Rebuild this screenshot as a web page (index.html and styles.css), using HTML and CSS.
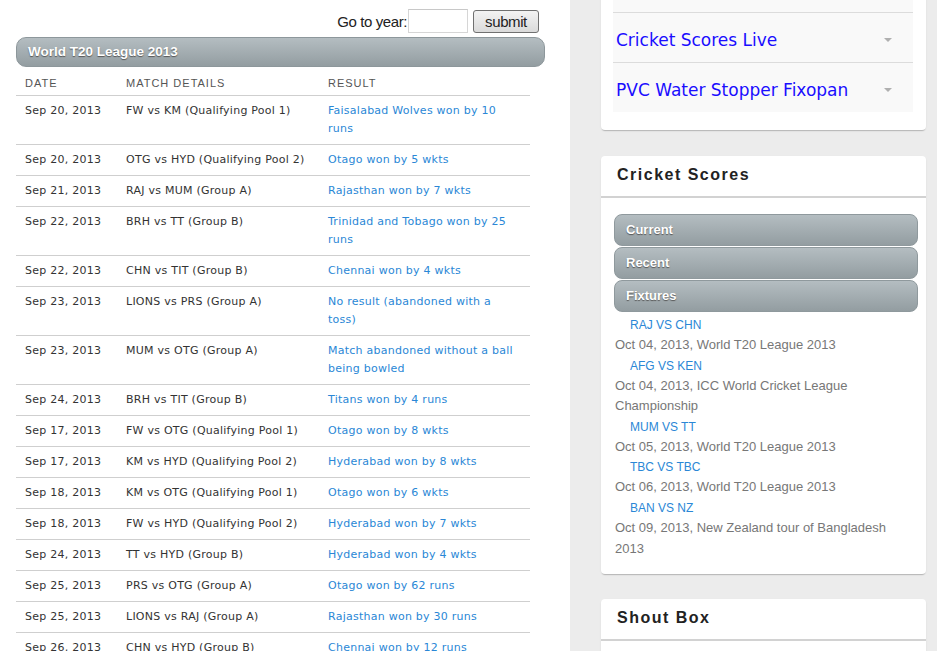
FILE: index.html
```html
<!DOCTYPE html>
<html>
<head>
<meta charset="utf-8">
<link rel="stylesheet" href="styles.css">
</head>
<body>
<div class="page">
  <main class="main">
    <form class="year-form">
      <label class="year-label">Go to year:</label>
      <input class="year-input" type="text">
      <button class="year-submit" type="button">submit</button>
    </form>
    <div class="title-bar">World T20 League 2013</div>
    <table class="matches">
      <colgroup><col class="c1"><col class="c2"><col class="c3"></colgroup>
      <thead>
        <tr><th>Date</th><th>Match Details</th><th>Result</th></tr>
      </thead>
      <tbody>
        <tr><td>Sep 20, 2013</td><td>FW vs KM (Qualifying Pool 1)</td><td><a href="#">Faisalabad Wolves won by 10 runs</a></td></tr>
        <tr><td>Sep 20, 2013</td><td>OTG vs HYD (Qualifying Pool 2)</td><td><a href="#">Otago won by 5 wkts</a></td></tr>
        <tr><td>Sep 21, 2013</td><td>RAJ vs MUM (Group A)</td><td><a href="#">Rajasthan won by 7 wkts</a></td></tr>
        <tr><td>Sep 22, 2013</td><td>BRH vs TT (Group B)</td><td><a href="#">Trinidad and Tobago won by 25 runs</a></td></tr>
        <tr><td>Sep 22, 2013</td><td>CHN vs TIT (Group B)</td><td><a href="#">Chennai won by 4 wkts</a></td></tr>
        <tr><td>Sep 23, 2013</td><td>LIONS vs PRS (Group A)</td><td><a href="#">No result (abandoned with a toss)</a></td></tr>
        <tr><td>Sep 23, 2013</td><td>MUM vs OTG (Group A)</td><td><a href="#">Match abandoned without a ball being bowled</a></td></tr>
        <tr><td>Sep 24, 2013</td><td>BRH vs TIT (Group B)</td><td><a href="#">Titans won by 4 runs</a></td></tr>
        <tr><td>Sep 17, 2013</td><td>FW vs OTG (Qualifying Pool 1)</td><td><a href="#">Otago won by 8 wkts</a></td></tr>
        <tr><td>Sep 17, 2013</td><td>KM vs HYD (Qualifying Pool 2)</td><td><a href="#">Hyderabad won by 8 wkts</a></td></tr>
        <tr><td>Sep 18, 2013</td><td>KM vs OTG (Qualifying Pool 1)</td><td><a href="#">Otago won by 6 wkts</a></td></tr>
        <tr><td>Sep 18, 2013</td><td>FW vs HYD (Qualifying Pool 2)</td><td><a href="#">Hyderabad won by 7 wkts</a></td></tr>
        <tr><td>Sep 24, 2013</td><td>TT vs HYD (Group B)</td><td><a href="#">Hyderabad won by 4 wkts</a></td></tr>
        <tr><td>Sep 25, 2013</td><td>PRS vs OTG (Group A)</td><td><a href="#">Otago won by 62 runs</a></td></tr>
        <tr><td>Sep 25, 2013</td><td>LIONS vs RAJ (Group A)</td><td><a href="#">Rajasthan won by 30 runs</a></td></tr>
        <tr><td>Sep 26, 2013</td><td>CHN vs HYD (Group B)</td><td><a href="#">Chennai won by 12 runs</a></td></tr>
      </tbody>
    </table>
  </main>
  <aside class="sidebar">
    <section class="panel panel-ads">
      <ul class="ad-list">
        <li class="ad-item ad-blank"></li>
        <li class="ad-item"><a href="#">Cricket Scores Live</a><span class="caret"></span></li>
        <li class="ad-item"><a href="#">PVC Water Stopper Fixopan</a><span class="caret"></span></li>
      </ul>
    </section>
    <section class="panel panel-scores">
      <h2 class="panel-title">Cricket Scores</h2>
      <div class="panel-body">
        <div class="tab">Current</div>
        <div class="tab">Recent</div>
        <div class="tab">Fixtures</div>
        <ul class="fixtures">
          <li><a href="#">RAJ VS CHN</a><p>Oct 04, 2013, World T20 League 2013</p></li>
          <li><a href="#">AFG VS KEN</a><p>Oct 04, 2013, ICC World Cricket League Championship</p></li>
          <li><a href="#">MUM VS TT</a><p>Oct 05, 2013, World T20 League 2013</p></li>
          <li><a href="#">TBC VS TBC</a><p>Oct 06, 2013, World T20 League 2013</p></li>
          <li><a href="#">BAN VS NZ</a><p>Oct 09, 2013, New Zealand tour of Bangladesh 2013</p></li>
        </ul>
      </div>
    </section>
    <section class="panel panel-shout">
      <h2 class="panel-title">Shout Box</h2>
      <div class="panel-body shout-body"></div>
    </section>
  </aside>
</div>
</body>
</html>
```

FILE: styles.css
```css
html, body {
  margin: 0;
  padding: 0;
  height: 100%;
  overflow: hidden;
}
body {
  font-family: "Liberation Sans", Arial, sans-serif;
  background: #ececec;
}
.page {
  display: flex;
  min-height: 100vh;
  align-items: stretch;
}
.main {
  width: 570px;
  flex: none;
  background: #fff;
  box-sizing: border-box;
  padding: 9px 0 0 16px;
}
.year-form {
  width: 523px;
  display: flex;
  justify-content: flex-end;
  align-items: center;
  margin: 0;
  height: 24px;
}
.year-label {
  font-size: 15px;
  letter-spacing: -0.4px;
  color: #222;
  margin-right: 1px;
}
.year-input {
  width: 60px;
  height: 24px;
  box-sizing: border-box;
  border: 1px solid #d6d6d6;
  border-top-color: #c8c8c8;
  margin: 0 5px 0 0;
  padding: 0;
}
.year-submit {
  width: 66px;
  height: 23px;
  box-sizing: border-box;
  margin-top: 1px;
  border: 1px solid #707070;
  border-radius: 3px;
  background: linear-gradient(#f3f3f3, #dadada);
  font-family: "Liberation Sans", Arial, sans-serif;
  font-size: 15px;
  letter-spacing: -0.4px;
  color: #222;
  padding: 0;
}
.title-bar {
  margin-top: 4px;
  width: 529px;
  height: 30px;
  box-sizing: border-box;
  border: 1px solid #8d979b;
  border-radius: 10px;
  background: linear-gradient(#b4bdc1, #939da1);
  color: #fff;
  font-weight: bold;
  font-size: 13.5px;
  line-height: 27px;
  padding-left: 11px;
  text-shadow: 0 1px 1px #555;
}
.matches {
  margin-top: 1px;
  width: 514px;
  border-collapse: collapse;
  table-layout: fixed;
  font-family: "DejaVu Sans", Verdana, sans-serif;
  font-size: 11px;
  letter-spacing: 0.25px;
  color: #333;
}
.c1 { width: 101px; }
.c2 { width: 202px; }
.c3 { width: 211px; }
.matches th {
  text-align: left;
  font-family: "Liberation Sans", Arial, sans-serif;
  font-weight: normal;
  font-size: 11px;
  letter-spacing: 1px;
  text-transform: uppercase;
  color: #555;
  line-height: 18px;
  padding: 6px 9px 3px;
  border-bottom: 1px solid #cfcfcf;
}
.matches td {
  vertical-align: top;
  line-height: 18px;
  padding: 6px 9px 6px;
  border-bottom: 1px solid #cfcfcf;
}
.matches td:first-child { padding-right: 0; }
.matches a {
  color: #2a87d6;
  text-decoration: none;
}
.sidebar {
  flex: 1;
  padding: 0 11px 0 31px;
}
.panel {
  background: #fff;
  border-radius: 4px;
  box-shadow: 0 2px 1px -1px rgba(0, 0, 0, 0.18), 0 1px 2px rgba(0, 0, 0, 0.08);
}
.panel-ads {
  margin-top: -39px;
  padding: 12px 13px 18px 12px;
}
.ad-list {
  list-style: none;
  margin: 0;
  padding: 0;
  background: #f9f9f9;
}
.ad-item {
  display: flex;
  align-items: center;
  justify-content: space-between;
  height: 49px;
  border-top: 1px solid #dcdcdc;
  padding: 0 21px 0 3px;
}
.ad-item.ad-blank {
  height: 39px;
  border-top: none;
}
.ad-item a {
  font-family: "DejaVu Sans", Verdana, sans-serif;
  font-size: 17px;
  color: #1a0dff;
  text-decoration: none;
  margin-top: 4px;
}
.caret {
  width: 0;
  height: 0;
  border-left: 4px solid transparent;
  border-right: 4px solid transparent;
  border-top: 4px solid #b0b0b0;
  margin-top: 4px;
}
.panel-scores {
  margin-top: 26px;
}
.panel-title {
  margin: 0;
  font-size: 16px;
  font-weight: bold;
  letter-spacing: 1.5px;
  color: #222;
  line-height: 20px;
  padding: 9px 16px 11px;
  border-bottom: 2px solid #d2d2d2;
}
.panel-scores .panel-body {
  padding: 16px 8px 15px 13px;
}
.tab {
  height: 32px;
  box-sizing: border-box;
  border: 1px solid #8f999d;
  border-radius: 8px;
  background: linear-gradient(#b4bdc1, #939da1);
  color: #fff;
  font-weight: bold;
  font-size: 13px;
  line-height: 29px;
  padding-left: 11px;
  text-shadow: 0 1px 1px #555;
  margin-bottom: 1px;
}
.fixtures {
  list-style: none;
  margin: 3px 0 0 1px;
  padding: 0;
}
.fixtures a {
  display: block;
  padding-left: 15px;
  font-size: 12px;
  line-height: 20px;
  color: #2a87d6;
  text-decoration: none;
}
.fixtures p {
  margin: 0;
  font-size: 13px;
  line-height: 20.6px;
  color: #777;
}
.panel-shout {
  margin-top: 25px;
}
.shout-body {
  height: 120px;
}
```
